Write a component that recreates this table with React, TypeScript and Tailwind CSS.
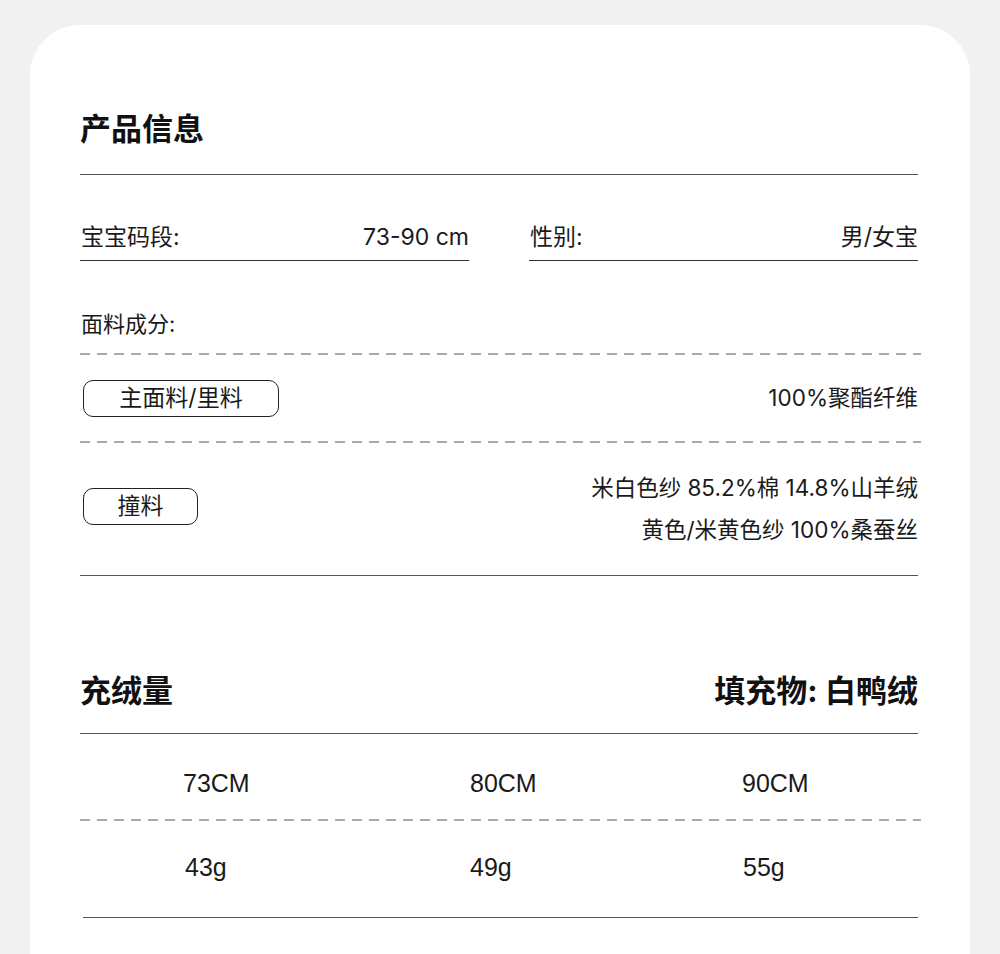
import React from "react";

const cjk = "font-['Inter','Noto_Sans_CJK_SC',sans-serif]";
const dashed =
  "h-[2px] bg-[repeating-linear-gradient(to_right,#aaaaaa_0,#aaaaaa_10px,transparent_10px,transparent_17px)]";

export default function App() {
  return (
    <div className={`min-h-[954px] bg-[#f1f1f1] pt-[25px] px-[30px] ${cjk} text-[#1a1a1a]`}>
      <div className="bg-white rounded-t-[50px] min-h-[929px] pl-[50px] pr-[52px] pt-[84px]">
        {/* 产品信息 */}
        <h1 className="text-[31px] leading-[40px] font-bold text-[#111]">产品信息</h1>
        <div className="mt-[25px] border-t border-[#555]" />

        <div className="mt-[47px] flex justify-between">
          <div className="w-[389px]">
            <div className="flex justify-between text-[23px] leading-[30px] pl-[1px]">
              <span>宝宝码段:</span>
              <span>73-90 cm</span>
            </div>
            <div className="mt-[8px] border-t border-[#333]" />
          </div>
          <div className="w-[389px]">
            <div className="flex justify-between text-[23px] leading-[30px] pl-[1px]">
              <span>性别:</span>
              <span>男/女宝</span>
            </div>
            <div className="mt-[8px] border-t border-[#333]" />
          </div>
        </div>

        <div className="mt-[48px] text-[22px] leading-[30px] pl-[1px]">面料成分:</div>
        <div className={`mt-[14px] -mr-[3px] ${dashed}`} />

        <div className="h-[86px] flex items-center justify-between pl-[3px]">
          <div className="w-[196px] h-[37px] border border-[#222] rounded-[10px] flex items-center justify-center text-[23px]">
            主面料/里料
          </div>
          <div className="text-[22.5px]">100%聚酯纤维</div>
        </div>
        <div className={`-mr-[3px] ${dashed}`} />

        <div className="h-[132px] flex items-center justify-between pl-[3px]">
          <div className="w-[115px] h-[37px] border border-[#222] rounded-[10px] flex items-center justify-center text-[23px] -mt-[6px]">
            撞料
          </div>
          <div className="text-[22.5px] leading-[42px] text-right">
            <div>米白色纱 85.2%棉 14.8%山羊绒</div>
            <div>黄色/米黄色纱 100%桑蚕丝</div>
          </div>
        </div>
        <div className="border-t border-[#555]" />

        {/* 充绒量 */}
        <div className="mt-[95px] flex justify-between text-[31px] leading-[40px] font-bold text-[#111]">
          <span>充绒量</span>
          <span>填充物: 白鸭绒</span>
        </div>
        <div className="mt-[22px] border-t border-[#555]" />

        <div className="font-['Liberation_Sans','Arial',sans-serif] text-[25px] leading-[32px]">
          <div className="mt-[33px] grid grid-cols-[390px_272px_1fr]">
            <span className="pl-[103px]">73CM</span>
            <span>80CM</span>
            <span>90CM</span>
          </div>
          <div className={`mt-[20px] -mr-[3px] ${dashed}`} />
          <div className="mt-[30px] grid grid-cols-[390px_272px_1fr]">
            <span className="pl-[105px]">43g</span>
            <span>49g</span>
            <span className="pl-[1px]">55g</span>
          </div>
        </div>
        <div className="mt-[34px] ml-[3px] border-t border-[#555]" />
      </div>
    </div>
  );
}
